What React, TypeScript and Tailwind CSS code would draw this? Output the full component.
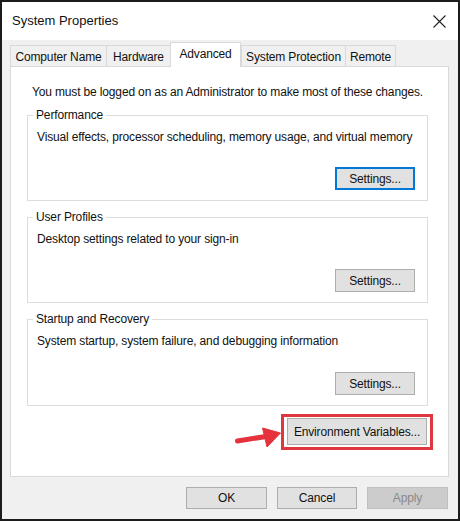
import React from "react";

const font = { fontFamily: '"Liberation Sans", Arial, sans-serif' };

function Btn({
  label,
  w,
  h = "h-[23px]",
  variant = "normal",
}: {
  label: string;
  w: string;
  h?: string;
  variant?: "normal" | "focus" | "disabled";
}) {
  const styles = {
    normal: "border border-[#adadad] bg-[#e1e1e1] text-[#111]",
    focus: "border-2 border-[#0078d7] bg-[#e1e1e1] text-[#111]",
    disabled: "border border-[#bfbfbf] bg-[#cccccc] text-[#8a8a8a]",
  }[variant];
  return (
    <div className={`${w} ${h} ${styles} flex items-center justify-center text-[12px] leading-none`}>
      {label}
    </div>
  );
}

function Group({
  title,
  text,
  h,
  focus = false,
}: {
  title: string;
  text: string;
  h: string;
  focus?: boolean;
}) {
  return (
    <div className={`${h} ml-[16px] mr-[20px] border border-[#dcdcdc] flex flex-col`}>
      <div className="-mt-[9px] ml-[5px] px-[3px] w-fit bg-white leading-[16px] text-[12px]">{title}</div>
      <div className="mt-[6px] pl-[9px] leading-[16px] text-[12px] whitespace-nowrap">{text}</div>
      <div className="mt-auto mb-[10px] mr-[12px] self-end">
        <Btn label="Settings..." w="w-[80px]" variant={focus ? "focus" : "normal"} />
      </div>
    </div>
  );
}

export default function App() {
  const tabs = [
    { label: "Computer Name", w: "w-[97px]" },
    { label: "Hardware", w: "w-[65px]" },
    { label: "Advanced", w: "w-[71px]", active: true },
    { label: "System Protection", w: "w-[105px]" },
    { label: "Remote", w: "w-[51px]" },
  ];

  return (
    <div
      style={font}
      className="w-[460px] h-[521px] border-2 border-[#1c1c1c] bg-[#f0f0f0] flex flex-col text-[#111] tracking-[-0.15px]"
    >
      {/* Title bar */}
      <div className="h-[38px] bg-white flex items-center justify-between pl-[10px] pr-[12px]">
        <span className="text-[13px] tracking-normal">System Properties</span>
        <svg width="13" height="13" viewBox="0 0 13 13">
          <path d="M0.5 0.5 L12.5 12.5 M12.5 0.5 L0.5 12.5" stroke="#222" strokeWidth="1.1" fill="none" />
        </svg>
      </div>

      {/* Tabs */}
      <div className="h-[26px] pl-[8px] flex items-end">
        {tabs.map((t) =>
          t.active ? (
            <div
              key={t.label}
              className={`${t.w} h-[25px] -mb-px relative z-10 bg-white border border-b-0 border-[#d9d9d9] flex items-center justify-center text-[12px] pb-[2px]`}
            >
              {t.label}
            </div>
          ) : (
            <div
              key={t.label}
              className={`${t.w} h-[21px] bg-[#f0f0f0] border border-b-0 border-[#d9d9d9] -mr-px flex items-center justify-center text-[12px] pt-[1px]`}
            >
              {t.label}
            </div>
          )
        )}
      </div>

      {/* Panel */}
      <div className="ml-[8px] mr-[9px] h-[411px] bg-white border border-[#d9d9d9] flex flex-col">
        <div className="pt-[17px] pl-[21px] leading-[16px] text-[12px] whitespace-nowrap">
          You must be logged on as an Administrator to make most of these changes.
        </div>
        <div className="mt-[15px]">
          <Group
            title="Performance"
            text="Visual effects, processor scheduling, memory usage, and virtual memory"
            h="h-[86px]"
            focus
          />
        </div>
        <div className="mt-[16px]">
          <Group title="User Profiles" text="Desktop settings related to your sign-in" h="h-[86px]" />
        </div>
        <div className="mt-[16px]">
          <Group
            title="Startup and Recovery"
            text="System startup, system failure, and debugging information"
            h="h-[87px]"
          />
        </div>

        {/* Environment Variables with highlight */}
        <div className="mt-[8px] mr-[15px] flex items-start justify-end">
          <svg width="46" height="24" viewBox="0 0 46 24" className="mt-[10px]">
            <path d="M2.5 17 L31 12.5" stroke="#e5323c" strokeWidth="5" strokeLinecap="round" fill="none" />
            <path d="M27.5 4 L45.5 9 L32 23 Z" fill="#e5323c" strokeLinejoin="round" stroke="#e5323c" strokeWidth="1" />
          </svg>
          <div className="border-[3px] border-[#e0363f] px-[3px] pt-[1px] pb-[2px]">
            <Btn label="Environment Variables..." w="w-[140px]" h="h-[27px]" />
          </div>
        </div>
      </div>

      {/* Bottom buttons */}
      <div className="mt-[10px] pr-[10px] flex justify-end gap-[10px]">
        <Btn label="OK" w="w-[81px]" h="h-[22px]" />
        <Btn label="Cancel" w="w-[80px]" h="h-[22px]" />
        <Btn label="Apply" w="w-[81px]" h="h-[22px]" variant="disabled" />
      </div>
    </div>
  );
}
